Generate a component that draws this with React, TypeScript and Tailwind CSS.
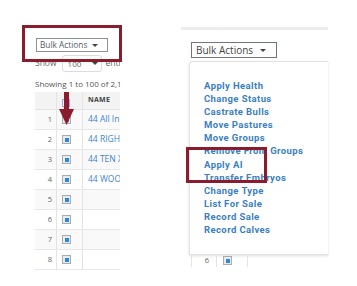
import React from "react";

const names: string[] = ["44 All In I", "44 RIGHT TIME", "44 TEN X 7008", "44 WOODHILL", "", "", "", ""];

const actions: string[] = [
  "Apply Health",
  "Change Status",
  "Castrate Bulls",
  "Move Pastures",
  "Move Groups",
  "Remove From Groups",
  "Apply AI",
  "Transfer Embryos",
  "Change Type",
  "List For Sale",
  "Record Sale",
  "Record Calves",
];

const Check: React.FC = () => (
  <div className="w-[9px] h-[9px] border border-[#a8adb3] bg-[#e9ecef] flex items-center justify-center">
    <div className="w-[4px] h-[4px] bg-[#2f87dc]" />
  </div>
);

const Caret: React.FC = () => (
  <div className="shrink-0 w-0 h-0 border-l-[3px] border-r-[3px] border-t-[3px] border-l-transparent border-r-transparent border-t-[#444]" />
);

const App: React.FC = () => {
  return (
    <div className="w-[357px] h-[286px] bg-white relative overflow-hidden flex" style={{ fontFamily: "'Open Sans', sans-serif" }}>
      {/* left screenshot */}
      <div className="ml-[35px] w-[85px] pt-[38px] overflow-hidden flex flex-col shrink-0">
        <div className="ml-[1px] w-[72px] h-[14px] border border-[#8c929a] flex items-center justify-between pl-[3px] pr-[9px] shrink-0">
          <span className="text-[8.3px] leading-none text-[#555b66] whitespace-nowrap">Bulk Actions</span>
          <Caret />
        </div>
        <div className="mt-[3px] h-[17px] flex items-center whitespace-nowrap text-[8.5px] text-[#666]">
          <span>Show</span>
          <div className="ml-[5px] w-[40px] h-[17px] border border-[#dcdcdc] rounded-[3px] flex items-center justify-between pl-[5px] pr-[3px] shrink-0">
            <span className="text-[8px]">100</span>
            <Caret />
          </div>
          <span className="ml-[4px]">entries</span>
        </div>
        <div className="mt-[6px] h-[12px] text-[8px] leading-[12px] text-[#555] whitespace-nowrap">Showing 1 to 100 of 2,193 entries</div>
        <div className="mt-[2px] w-[160px] flex flex-col">
          <div className="h-[18px] flex bg-[#f3f3f3] border-b border-[#e4e4e4]">
            <div className="w-[22px] border-r border-[#e4e4e4]" />
            <div className="w-[26px] border-r border-[#e4e4e4] flex items-center pl-[5px] pt-[5px]">
              <div className="w-[8px] h-[8px] border border-[#a9a3e6]" />
            </div>
            <div className="flex-1 flex items-center pl-[5px] text-[7px] font-bold text-[#444] tracking-[0.3px]">NAME</div>
          </div>
          {names.map((n, i) => (
            <div key={i} className={`h-[20px] flex border-b border-[#e8e8e8] ${i % 2 === 0 ? "bg-[#f9f9f9]" : "bg-white"}`}>
              <div className="w-[22px] border-r border-[#e4e4e4] flex items-center justify-end pr-[4px] text-[7.5px] text-[#666]">{i + 1}</div>
              <div className="w-[26px] border-r border-[#e4e4e4] flex items-center pl-[5px]">
                <Check />
              </div>
              <div className="flex-1 flex items-center pl-[5px] text-[8.5px] text-[#3d86cc] whitespace-nowrap">{n}</div>
            </div>
          ))}
        </div>
      </div>

      {/* right screenshot */}
      <div className="ml-[61px] w-[147px] flex flex-col shrink-0">
        <div className="mt-[27px] h-[3px] bg-[#ededed]" />
        <div className="mt-[12px] ml-[10px] w-[86px] h-[16px] border border-[#6f757d] flex items-center justify-between pl-[4px] pr-[10px]">
          <span className="text-[10px] leading-none text-[#444] whitespace-nowrap">Bulk Actions</span>
          <Caret />
        </div>
        <div className="mt-[3px] ml-[8px] h-[194px] border-l border-t border-b border-[#e2e2e2] rounded-tl-[4px] shadow-[0_1px_3px_rgba(0,0,0,0.12)] pl-[14px] pt-[17px]" style={{ fontFamily: "Roboto, sans-serif" }}>
          {actions.map((a) => (
            <div key={a} className="text-[9.5px] leading-[13.1px] font-bold tracking-[0.4px] text-[#3a7fc3] whitespace-nowrap">{a}</div>
          ))}
        </div>
        <div className="ml-[10px] h-[12px] flex">
          <div className="w-[26px] border-l border-r border-[#e4e4e4] flex justify-end pr-[7px] pt-[1px] text-[7.5px] leading-[9px] text-[#666]">6</div>
          <div className="w-[31px] border-r border-[#e4e4e4] pl-[6px] pt-[1px]">
            <Check />
          </div>
        </div>
      </div>

      {/* annotations */}
      <div className="absolute left-[22px] top-[25px] w-[100px] h-[37px] border-[3px] border-[#8b1c2c]" />
      <svg className="absolute left-[59px] top-[92px]" width="15" height="34" viewBox="0 0 15 34">
        <rect x="5" y="0" width="5" height="18" fill="#8b1c2c" />
        <polygon points="0,17 15,17 7.5,33" fill="#8b1c2c" />
      </svg>
      <div className="absolute left-[186px] top-[147px] w-[81px] h-[36px] border-[3px] border-[#8b1c2c]" />
    </div>
  );
};

export default App;
